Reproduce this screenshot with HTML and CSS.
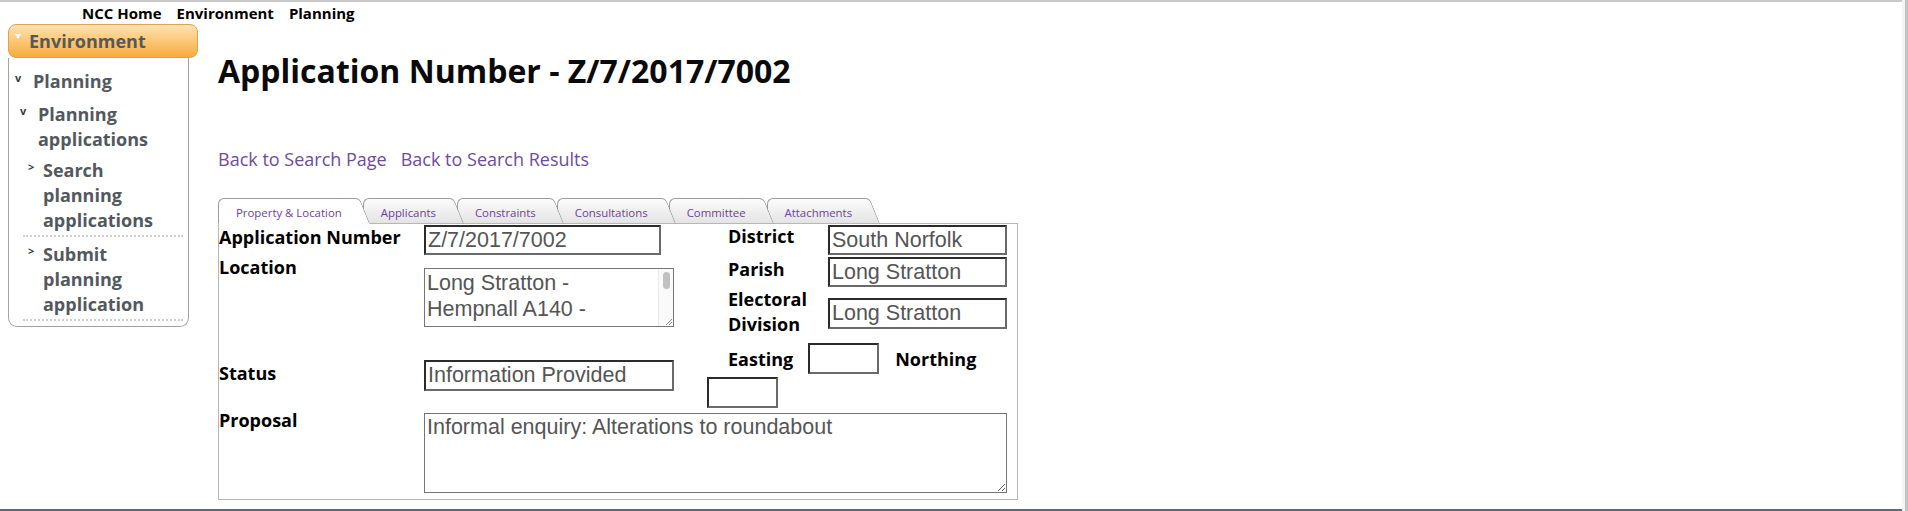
FILE: index.html
```html
<!DOCTYPE html>
<html lang="en">
<head>
<meta charset="utf-8">
<title>Application Number - Z/7/2017/7002</title>
<link rel="stylesheet" href="styles.css">
</head>
<body>
<div class="page">
  <div class="frame">
    <nav class="topnav">
      <a href="#">NCC Home</a>
      <a href="#">Environment</a>
      <a href="#">Planning</a>
    </nav>
    <div class="layout">
      <aside class="sidebar">
        <div class="side-head"><span class="tri"></span>Environment</div>
        <div class="side-box">
          <div class="item lvl1"><span class="chev">v</span><span class="txt">Planning</span></div>
          <div class="item lvl2"><span class="chev">v</span><span class="txt">Planning applications</span></div>
          <div class="item lvl3"><span class="chev">&gt;</span><span class="txt">Search planning applications</span></div>
          <div class="item lvl3"><span class="chev">&gt;</span><span class="txt">Submit planning application</span></div>
        </div>
      </aside>
      <main class="main">
        <h1 class="title">Application Number - Z/7/2017/7002</h1>
        <div class="links">
          <a href="#">Back to Search Page</a>
          <a href="#">Back to Search Results</a>
        </div>
        <div class="tabs">
          <div class="tab active t1"><span>Property &amp; Location</span></div>
          <div class="tab t2"><span>Applicants</span></div>
          <div class="tab t3"><span>Constraints</span></div>
          <div class="tab t4"><span>Consultations</span></div>
          <div class="tab t5"><span>Committee</span></div>
          <div class="tab t6"><span>Attachments</span></div>
        </div>
        <div class="panel">
          <div class="cols">
            <div class="col-left">
              <div class="row r1">
                <div class="lbl">Application Number</div>
                <input class="field f-app" type="text" value="Z/7/2017/7002" readonly>
              </div>
              <div class="row r2">
                <div class="lbl">Location</div>
                <div class="loc-wrap">
                  <textarea class="loc-text" readonly>Long Stratton - Hempnall A140 - Roundabout</textarea>
                  <div class="vscroll">
                    <div class="thumb"></div>
                    <svg class="grip" width="9" height="9" viewBox="0 0 9 9"><path d="M8 2 L2 8 M8 5 L5 8" stroke="#8a8a8a" stroke-width="1" fill="none"/></svg>
                  </div>
                </div>
              </div>
              <div class="row r3">
                <div class="lbl lbl-status">Status</div>
                <input class="field f-status" type="text" value="Information Provided" readonly>
              </div>
            </div>
            <div class="col-right">
              <div class="rrow rr1">
                <div class="rlbl">District</div>
                <input class="field f-right" type="text" value="South Norfolk" readonly>
              </div>
              <div class="rrow rr2">
                <div class="rlbl">Parish</div>
                <input class="field f-right" type="text" value="Long Stratton" readonly>
              </div>
              <div class="rrow rr3">
                <div class="rlbl">Electoral Division</div>
                <input class="field f-right f-elec" type="text" value="Long Stratton" readonly>
              </div>
              <div class="rrow rr4">
                <div class="elbl">Easting</div>
                <input class="field f-small" type="text" value="" readonly>
                <div class="nlbl">Northing</div>
                <input class="field f-small f-north" type="text" value="" readonly>
              </div>
            </div>
          </div>
          <div class="row r4">
            <div class="lbl">Proposal</div>
            <textarea class="area a-prop" readonly>Informal enquiry: Alterations to roundabout</textarea>
          </div>
        </div>
      </main>
    </div>
  </div>
  <div class="edge"></div>
</div>
</body>
</html>
```

FILE: styles.css
```css
html, body {
  margin: 0;
  padding: 0;
  background: #ffffff;
}

body {
  font-family: "Open Sans", "Noto Sans", sans-serif;
  color: #000;
  overflow: hidden;
}

.page {
  display: flex;
  width: 1908px;
  height: 511px;
}

.frame {
  width: 1902px;
  height: 511px;
  box-sizing: border-box;
  border-top: 2px solid #c9c9c9;
  border-bottom: 2px solid #5f6a72;
}

.edge {
  width: 3px;
  height: 511px;
  background: #c3c3c3;
  border-left: 3px solid #f3f3f3;
}

/* top navigation */
.topnav {
  display: flex;
  gap: 15px;
  height: 22px;
  padding-left: 82px;
  align-items: center;
}

.topnav a {
  color: #000;
  text-decoration: none;
  font-weight: 700;
  font-size: 15px;
  line-height: 20px;
}

.layout {
  display: flex;
  align-items: flex-start;
}

/* sidebar */
.sidebar {
  margin-left: 8px;
  width: 190px;
}

.side-head {
  height: 34px;
  box-sizing: border-box;
  border: 1px solid #e0a24e;
  border-radius: 8px;
  background: linear-gradient(#fee2b0 0%, #fcca7c 45%, #f8aa3e 100%);
  display: flex;
  align-items: center;
  font-weight: 700;
  font-size: 18px;
  color: #585858;
  padding-left: 6px;
}

.tri {
  width: 0;
  height: 0;
  border-left: 3px solid transparent;
  border-right: 3px solid transparent;
  border-top: 5px solid #ffffff;
  margin-right: 8px;
  margin-top: -9px;
}

.side-box {
  width: 181px;
  box-sizing: border-box;
  height: 269px;
  border: 1px solid #a3a3a3;
  border-top: none;
  border-radius: 0 0 9px 9px;
  padding-top: 11px;
}

.item {
  display: flex;
  align-items: flex-start;
  font-weight: 700;
  font-size: 18px;
  line-height: 25px;
  color: #53585e;
}

.chev {
  flex: none;
  font-size: 11px;
  line-height: 11px;
  color: #3a3a3a;
  font-weight: 700;
  margin-top: 3px;
}

.txt { min-width: 0; }

.lvl1 .chev { margin-left: 6px; width: 18px; }
.lvl2 { margin-top: 8px; }
.lvl2 .chev { margin-left: 11px; width: 18px; }
.lvl3 {
  margin-left: 14px;
  width: 160px;
  border-bottom: 2px dotted #cfcfcf;
  padding-bottom: 2px;
}
.lvl3 .chev { margin-left: 5px; width: 15px; }
.lvl2 + .lvl3 { margin-top: 6px; }
.lvl3 + .lvl3 { margin-top: 5px; }

/* main content */
.main {
  margin-left: 20px;
}

.title {
  margin: 28px 0 0 0;
  font-size: 32px;
  line-height: 38px;
  font-weight: 700;
  color: #0a0a0a;
}

.links {
  margin-top: 57px;
  display: flex;
  gap: 14px;
  font-size: 18px;
  line-height: 24px;
}

.links a {
  color: #6c4c9f;
  text-decoration: none;
}

/* tabs */
.tabs {
  margin-top: 27px;
  display: flex;
  height: 26px;
  position: relative;
  z-index: 2;
}

.tab {
  position: relative;
  height: 26px;
  box-sizing: border-box;
  padding: 0 21px 0 18px;
  display: flex;
  align-items: center;
  font-size: 11.4px;
  color: #6b3fa3;
}

.tab span { position: relative; top: 1px; }

.tab::before {
  content: "";
  position: absolute;
  left: 0;
  right: 12px;
  top: 0;
  bottom: 0;
  background: linear-gradient(#fbfbfb, #e4e4e4);
  border: 1px solid #9c9c9c;
  border-right: none;
  border-bottom: 1px solid #bdb5b5;
  border-radius: 6px 0 0 0;
  z-index: -1;
}

.tab::after {
  content: "";
  position: absolute;
  right: -2px;
  width: 20px;
  top: 0;
  bottom: 0;
  background: linear-gradient(#fbfbfb, #e4e4e4);
  border-top: 1px solid #9c9c9c;
  border-right: 1px solid #9c9c9c;
  border-bottom: 1px solid #bdb5b5;
  border-radius: 0 5px 0 0;
  transform: skewX(22deg);
  z-index: -1;
}

.tab.active::before,
.tab.active::after {
  background: #ffffff;
  border-bottom-color: #ffffff;
}

.t1 { z-index: 7; }
.t2 { z-index: 6; }
.t3 { z-index: 5; }
.t4 { z-index: 4; }
.t5 { z-index: 3; }
.t6 { z-index: 2; }

/* panel */
.panel {
  width: 800px;
  height: 277px;
  box-sizing: border-box;
  border: 1px solid #bdb5b5;
  margin-top: -1px;
  padding-top: 1px;
  position: relative;
  z-index: 1;
}

.cols {
  display: flex;
}

.col-left {
  width: 488px;
}

.row {
  display: flex;
  align-items: flex-start;
}

.lbl {
  width: 205px;
  flex: none;
  font-weight: 700;
  font-size: 18px;
  line-height: 24px;
}

.field {
  box-sizing: border-box;
  margin: 0;
  font-family: "Liberation Sans", Arial, sans-serif;
  font-size: 21.5px;
  color: #555555;
  padding: 0 2px;
  border: 2px solid;
  border-color: #2b2b2b #6a6a6a #6a6a6a #2b2b2b;
  background: #fff;
  outline: none;
}

.f-app { width: 237px; height: 30px; }

.area {
  box-sizing: border-box;
  margin: 0;
  font-family: "Liberation Sans", Arial, sans-serif;
  font-size: 21.5px;
  line-height: 25px;
  color: #555555;
  padding: 1px 2px;
  border: 1px solid #767676;
  background: #fff;
  outline: none;
}

.loc-wrap {
  display: flex;
  width: 250px;
  height: 59px;
  box-sizing: border-box;
  border: 1px solid #767676;
  margin-top: 13px;
  background: #fff;
}

.loc-text {
  flex: 1;
  min-width: 0;
  margin: 0;
  border: none;
  outline: none;
  resize: none;
  overflow: hidden;
  padding: 1px 2px;
  font-family: "Liberation Sans", Arial, sans-serif;
  font-size: 21.5px;
  line-height: 26px;
  color: #555555;
  background: #fff;
}

.vscroll {
  flex: none;
  width: 15px;
  box-sizing: border-box;
  background: #fafafa;
  border-left: 1px solid #e9e9e9;
  display: flex;
  flex-direction: column;
  justify-content: space-between;
  align-items: center;
}

.thumb {
  width: 7px;
  height: 17px;
  margin-top: 3px;
  border-radius: 4px;
  background: #c1c1c1;
}

.grip {
  align-self: flex-end;
  display: block;
}

.r3 { margin-top: 33px; }
.lbl-status { padding-top: 1px; }
.f-status { width: 250px; height: 31px; }

.col-right {
  width: 303px;
}

.rrow {
  display: flex;
  align-items: flex-start;
}

.rlbl {
  width: 100px;
  margin-left: 21px;
  flex: none;
  font-weight: 700;
  font-size: 18px;
  line-height: 24px;
}

.f-right { width: 179px; height: 30px; }
.rr1 .rlbl { margin-top: -1px; }
.rr2 { margin-top: 2px; }
.rr3 .rlbl { line-height: 25px; }
.f-elec { height: 31px; margin-top: 11px; }

.rr4 {
  margin-top: 6px;
  flex-wrap: wrap;
  align-items: center;
  row-gap: 3px;
}

.elbl {
  margin-left: 21px;
  margin-right: 15px;
  font-weight: 700;
  font-size: 18px;
  line-height: 24px;
}

.nlbl {
  margin-left: 16px;
  font-weight: 700;
  font-size: 18px;
  line-height: 24px;
}

.f-small { width: 71px; height: 31px; }

.r4 .lbl { line-height: 24px; }

.a-prop {
  width: 583px;
  height: 80px;
  margin-top: 5px;
  resize: both;
  overflow: hidden;
}
```
